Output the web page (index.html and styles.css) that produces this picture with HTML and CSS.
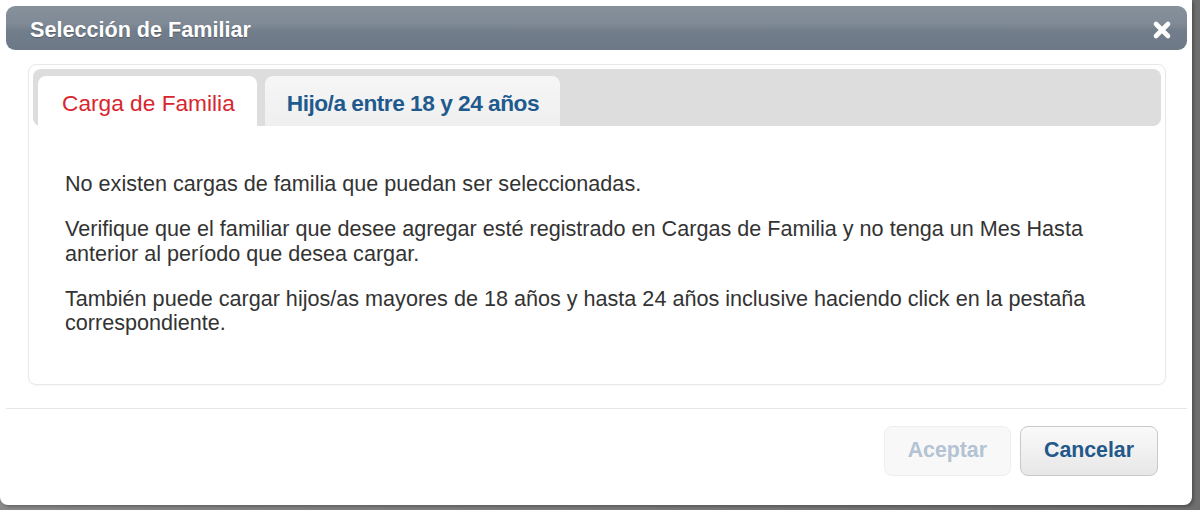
FILE: index.html
```html
<!DOCTYPE html>
<html lang="es">
<head>
<meta charset="utf-8">
<title>Selección de Familiar</title>
<link rel="stylesheet" href="styles.css">
</head>
<body>
<div class="dialog">
  <div class="titlebar">
    <span class="title">Selección de Familiar</span>
    <button class="close" aria-label="Cerrar">
      <svg width="20" height="20" viewBox="0 0 20 20"><path d="M4 4L16 16M16 4L4 16" stroke="#fff" stroke-width="4.6" stroke-linecap="round"/></svg>
    </button>
  </div>
  <div class="body">
    <div class="tabs">
      <div class="tabbar">
        <div class="tab active">Carga de Familia</div>
        <div class="tab">Hijo/a entre 18 y 24 años</div>
      </div>
      <div class="panel">
        <p>No existen cargas de familia que puedan ser seleccionadas.</p>
        <p>Verifique que el familiar que desee agregar esté registrado en Cargas de Familia y no tenga un Mes Hasta anterior al período que desea cargar.</p>
        <p>También puede cargar hijos/as mayores de 18 años y hasta 24 años inclusive haciendo click en la pestaña correspondiente.</p>
      </div>
    </div>
  </div>
  <div class="footer">
    <button class="btn disabled">Aceptar</button>
    <button class="btn">Cancelar</button>
  </div>
</div>
</body>
</html>
```
FILE: styles.css
```css
html, body {
  margin: 0;
  padding: 0;
}
body {
  width: 1200px;
  height: 510px;
  overflow: hidden;
  background: linear-gradient(90deg, #8a8a8a, #6e6e6e);
  font-family: "Liberation Sans", Arial, sans-serif;
}
.dialog {
  width: 1192px;
  height: 505px;
  box-sizing: border-box;
  background: #fff;
  border-radius: 0 0 8px 8px;
  padding: 6px 5px 0 6px;
  box-shadow: 2px 2px 3px rgba(0,0,0,0.25);
  display: flex;
  flex-direction: column;
}
.titlebar {
  height: 44px;
  border-radius: 9px;
  background: linear-gradient(180deg, #87919c 0%, #808a96 40%, #717d8a 58%, #6d7986 100%);
  display: flex;
  align-items: center;
  justify-content: space-between;
  padding: 0 14px 0 24px;
}
.title {
  color: #fff;
  font-weight: bold;
  font-size: 21.6px;
  text-shadow: 0 1px 1px rgba(0,0,0,0.25);
  margin-top: 3px;
}
.close {
  border: 0;
  background: none;
  padding: 0;
  width: 22px;
  height: 22px;
  display: flex;
  align-items: center;
  justify-content: center;
  margin-top: 4px;
}
.body {
  padding: 14px 21px 0 22px;
}
.tabs {
  border: 1px solid #e8e8e8;
  border-radius: 8px;
  padding: 4px 4px 0 4px;
  box-shadow: 0 1px 2px rgba(0,0,0,0.04);
}
.tabbar {
  background: #dddddd;
  border-radius: 8px;
  display: flex;
  gap: 8px;
  padding: 7px 5px 0 5px;
  height: 57px;
  box-sizing: border-box;
}
.tab {
  height: 50px;
  box-sizing: border-box;
  padding: 14px 21px 0 22px;
  font-size: 22.7px;
  border-radius: 8px 8px 0 0;
  background: linear-gradient(180deg, #f6f6f6, #efefef);
  color: #1f5a8e;
  font-weight: bold;
  letter-spacing: -0.5px;
}
.tab.active {
  background: #fff;
  color: #d8262f;
  font-weight: normal;
  padding: 14px 22px 0 24px;
  letter-spacing: 0;
}
.panel {
  padding: 46px 37px 48px 32px;
  color: #333;
  font-size: 21.6px;
  line-height: 24.5px;
}
.panel p {
  margin: 0 0 20.5px 0;
}
.panel p:last-child {
  margin-bottom: 0;
}
.footer {
  margin-top: 23px;
  border-top: 1px solid #e6e6e6;
  display: flex;
  justify-content: flex-end;
  gap: 9px;
  padding: 17px 29px 0 0;
}
.btn {
  height: 50px;
  box-sizing: border-box;
  border-radius: 8px;
  font-family: "Liberation Sans", Arial, sans-serif;
  font-weight: bold;
  font-size: 21.3px;
  padding: 0 23px;
  border: 1px solid #c9c9c9;
  background: linear-gradient(180deg, #fafafa, #e7e7e7);
  color: #23588a;
}
.btn.disabled {
  border-color: #eeeeee;
  background: #f8f8f8;
  color: #b3c3d3;
  padding: 0 23px;
}
```
